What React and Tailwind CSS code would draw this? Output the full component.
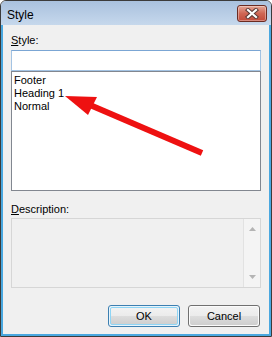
import React from "react";

export default function App() {
  const font = { fontFamily: '"Liberation Sans", Arial, sans-serif' };
  return (
    <div
      className="relative w-[272px] h-[337px] overflow-hidden bg-[#f0f0f0] border border-[#3b3b3b] rounded-t-[6px] flex flex-col text-black"
      style={font}
    >
      {/* Title bar */}
      <div className="h-[24px] shrink-0 flex items-start justify-between bg-gradient-to-b from-[#a9c1de] to-[#c6d8ec] pl-[6px] pr-[4px]">
        <span className="text-[12px] leading-[14px] mt-[7px] text-black">Style</span>
        <div className="mt-[4px] w-[30px] h-[17px] rounded-[3px] border border-[#6b2b22] bg-gradient-to-b from-[#e4a595] via-[#cf6654] to-[#c24a3a] flex items-center justify-center shadow-[inset_0_0_0_1px_rgba(255,255,255,0.35)]">
          <svg width="14" height="11" viewBox="0 0 14 11">
            <path d="M3 2 L11 9 M11 2 L3 9" stroke="#5a3a36" strokeWidth="4.2" strokeLinecap="square" />
            <path d="M3 2 L11 9 M11 2 L3 9" stroke="#ffffff" strokeWidth="2.2" strokeLinecap="square" />
          </svg>
        </div>
      </div>

      {/* Body with blue frame */}
      <div className="flex-1 flex flex-col border-x-2 border-b-2 border-[#4aa8e0]">
        <div className="flex-1 flex flex-col px-[8px] pt-[9px] text-[11px] leading-[13px]">
          <div className="mb-[3px]">
            <span className="underline underline-offset-[1px]">S</span>tyle:
          </div>
          <div className="h-[21px] bg-white border border-[#a3c3e3] border-t-[#7ba6d4]"></div>
          <div className="h-[120px] bg-white border border-[#828790] pl-[2px] pt-[2px]">
            <div>Footer</div>
            <div>Heading 1</div>
            <div>Normal</div>
          </div>
          <div className="mt-[12px] mb-[2px]">
            <span className="underline underline-offset-[1px]">D</span>escription:
          </div>
          <div className="h-[70px] border border-[#d6d6d6] flex justify-end">
            <div className="w-[17px] h-full border-l border-[#e2e2e2] bg-[#f4f4f4] flex flex-col items-center justify-between pt-[8px] pb-[8px]">
              <svg width="7" height="4" viewBox="0 0 7 4">
                <path d="M0 4 L3.5 0 L7 4 Z" fill="#b4b4b4" />
              </svg>
              <svg width="7" height="4" viewBox="0 0 7 4">
                <path d="M0 0 L7 0 L3.5 4 Z" fill="#b4b4b4" />
              </svg>
            </div>
          </div>
          <div className="mt-[17px] flex justify-end gap-[8px] pr-[1px]">
            <div className="w-[72px] h-[22px] rounded-[3px] border border-[#3c7fb1] p-[1px] bg-[#e8f4fb]">
              <div className="h-full rounded-[2px] border border-[#8fd5f5] bg-[linear-gradient(to_bottom,#f2f2f2_0%,#ebebeb_50%,#dddddd_50%,#cfcfcf_100%)] flex items-center justify-center">
                OK
              </div>
            </div>
            <div className="w-[72px] h-[22px] rounded-[3px] border border-[#707070] p-[1px] bg-[#fbfbfb]">
              <div className="h-full rounded-[2px] bg-[linear-gradient(to_bottom,#f2f2f2_0%,#ebebeb_50%,#dddddd_50%,#cfcfcf_100%)] flex items-center justify-center">
                Cancel
              </div>
            </div>
          </div>
        </div>
      </div>

      {/* Red annotation arrow */}
      <svg
        className="absolute left-0 top-0 pointer-events-none"
        width="272"
        height="337"
        viewBox="0 0 272 337"
      >
        <line x1="89" y1="104" x2="201" y2="152" stroke="#ee1111" strokeWidth="6" />
        <polygon points="64,95 96,96 87,114" fill="#ee1111" />
      </svg>
    </div>
  );
}
